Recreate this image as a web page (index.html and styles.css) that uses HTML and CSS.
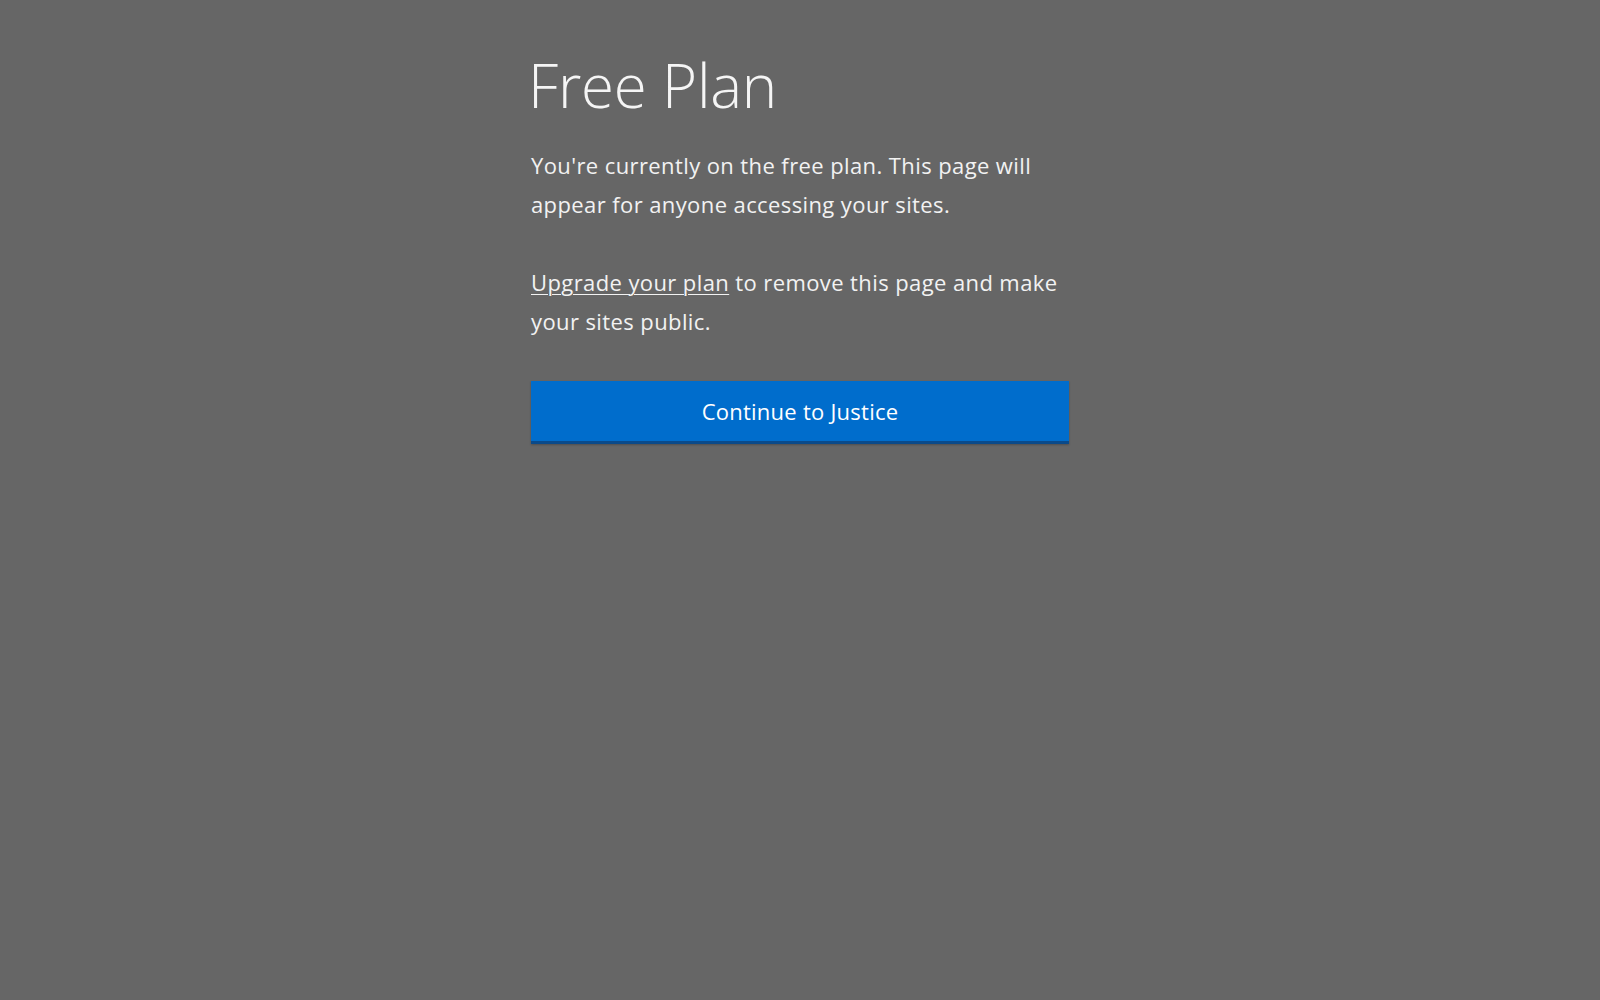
FILE: index.html
```html
<!DOCTYPE html>
<html lang="en">
<head>
<meta charset="utf-8">
<title>Free Plan</title>
<link rel="stylesheet" href="styles.css">
</head>
<body>
<main class="page">
  <section class="card">
    <h1 class="title">Free Plan</h1>
    <p class="text">You're currently on the free plan. This page will appear for anyone accessing your sites.</p>
    <p class="text"><a class="link" href="#">Upgrade your plan</a> to remove this page and make your sites public.</p>
    <button class="btn" type="button">Continue to Justice</button>
  </section>
</main>
</body>
</html>
```

FILE: styles.css
```css
html, body {
  margin: 0;
  padding: 0;
  height: 100%;
}
body {
  background: #666666;
  color: #f2f2f2;
  font-family: "Open Sans", "Noto Sans", sans-serif;
}
.page {
  display: flex;
  justify-content: center;
  padding-top: 44px;
}
.card {
  width: 538px;
  display: flex;
  flex-direction: column;
}
.title {
  margin: 0 0 20px -3px;
  font-size: 60px;
  font-weight: 300;
  line-height: 82px;
  letter-spacing: -0.2px;
  color: #f5f5f5;
}
.text {
  margin: 0 0 39px;
  font-size: 22px;
  line-height: 39px;
  letter-spacing: 0.4px;
}
.text:last-of-type {
  margin-bottom: 40px;
}
.link {
  color: inherit;
  text-decoration: underline;
  text-underline-offset: 3px;
  text-decoration-thickness: 1px;
}
.btn {
  height: 63px;
  border: 0;
  border-bottom: 3px solid #0a4a8a;
  background: #006dcc;
  color: #ffffff;
  font-family: "Open Sans", "Noto Sans", sans-serif;
  font-size: 22px;
  letter-spacing: 0.25px;
  padding: 0;
  cursor: pointer;
  box-shadow: 0 1px 2px rgba(0,0,0,0.25);
}
```
